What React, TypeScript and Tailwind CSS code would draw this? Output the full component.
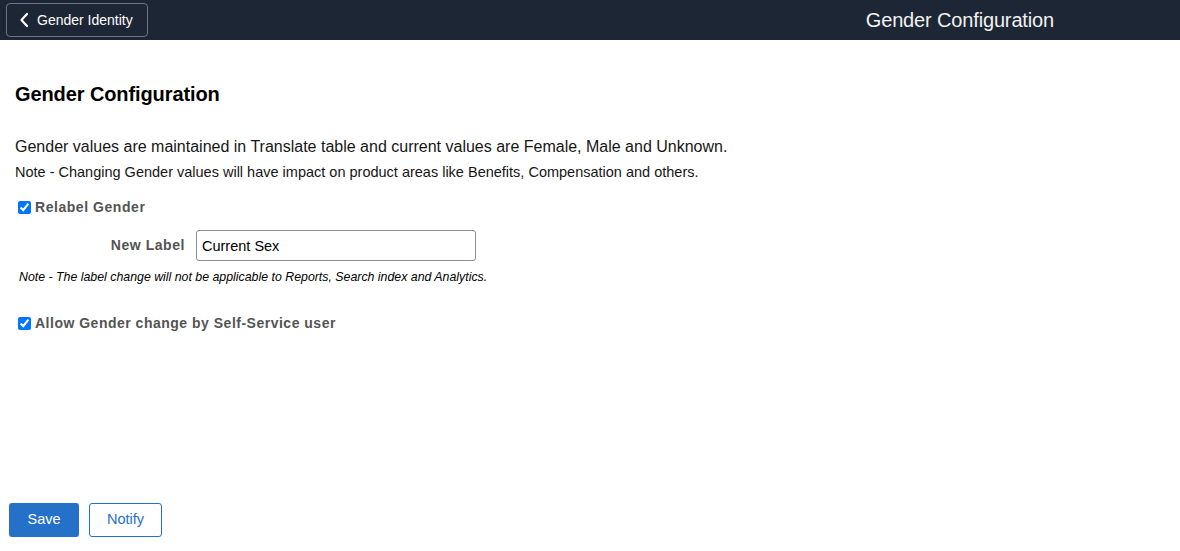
import React from "react";

export default function App() {
  return (
    <div className="min-h-[551px] h-[551px] flex flex-col bg-white" style={{ fontFamily: '"Liberation Sans", Arial, sans-serif' }}>
      <header className="h-[40px] bg-[#1d2634] flex items-center justify-between shrink-0">
        <button className="ml-[6px] h-[34px] w-[142px] border border-[#6b7585] rounded-[4px] flex items-center text-white text-[14px]">
          <svg width="10" height="16" viewBox="0 0 10 16" className="ml-[12px] mr-[8px]">
            <path d="M8 2 L2.5 8 L8 14" fill="none" stroke="white" strokeWidth="2.2" strokeLinecap="round" strokeLinejoin="round" />
          </svg>
          Gender Identity
        </button>
        <div className="text-[20px] text-[#f2f2f2] pr-[126px] tracking-[-0.15px]">Gender Configuration</div>
      </header>
      <main className="flex-1 flex flex-col px-[15px]">
        <h1 className="mt-[42px] text-[20px] font-bold leading-[24px] text-black tracking-[-0.1px]">Gender Configuration</h1>
        <p className="mt-[31px] text-[16px] leading-[20px] text-[#161616]">
          Gender values are maintained in Translate table and current values are Female, Male and Unknown.
        </p>
        <p className="mt-[6px] text-[14.5px] leading-[18px] text-[#161616]">
          Note - Changing Gender values will have impact on product areas like Benefits, Compensation and others.
        </p>
        <label className="mt-[17px] flex items-center ml-[3px] text-[14px] font-bold text-[#545454] leading-[18px] tracking-[0.55px]">
          <input type="checkbox" checked readOnly className="m-0 w-[13px] h-[13px] mr-[4px] accent-[#0075ff]" />
          Relabel Gender
        </label>
        <div className="mt-[14px] flex items-center">
          <div className="w-[170px] text-right text-[14px] font-bold text-[#545454] tracking-[0.55px]">New Label</div>
          <input
            type="text"
            value="Current Sex"
            readOnly
            className="ml-[11px] w-[280px] h-[31px] border border-[#8a8f96] rounded-[3px] px-[5px] text-[14.5px] text-black outline-none"
          />
        </div>
        <p className="mt-[8px] ml-[4px] text-[12.35px] italic text-black leading-[16px]">
          Note - The label change will not be applicable to Reports, Search index and Analytics.
        </p>
        <label className="mt-[29px] flex items-center ml-[3px] text-[14px] font-bold text-[#545454] leading-[18px] tracking-[0.5px]">
          <input type="checkbox" checked readOnly className="m-0 w-[13px] h-[13px] mr-[4px] accent-[#0075ff]" />
          Allow Gender change by Self-Service user
        </label>
      </main>
      <footer className="flex items-center gap-[10px] pl-[9px] pb-[14px] shrink-0">
        <button className="h-[34px] w-[70px] bg-[#2571c9] text-white text-[14.5px] rounded-[3px]">Save</button>
        <button className="h-[34px] w-[73px] border border-[#2571c9] text-[#2571c9] text-[14.5px] rounded-[3px] bg-white">Notify</button>
      </footer>
    </div>
  );
}
